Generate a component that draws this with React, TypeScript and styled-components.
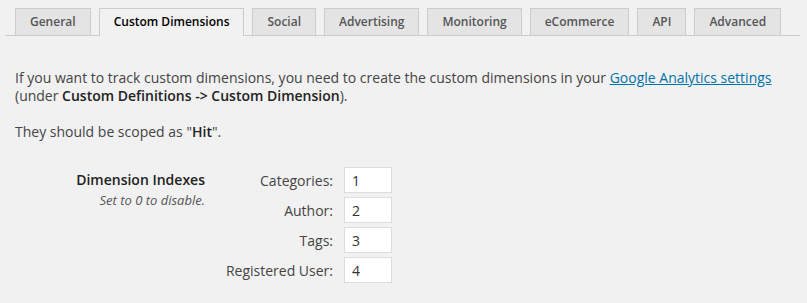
import { createGlobalStyle } from "styled-components"
import styled from "styled-components"

const tabs = [
  "General",
  "Custom Dimensions",
  "Social",
  "Advertising",
  "Monitoring",
  "eCommerce",
  "API",
  "Advanced",
]

const dimensions = [
  { label: "Categories:", value: "1" },
  { label: "Author:", value: "2" },
  { label: "Tags:", value: "3" },
  { label: "Registered User:", value: "4" },
]

const GlobalStyle = createGlobalStyle`
  html, body {
    margin: 0;
    padding: 0;
    background: #f1f1f1;
  }
  body {
    font-family: "Open Sans", "Liberation Sans", sans-serif;
    font-size: 14px;
    color: #444;
  }
`

const App = () => {
  return (
    <Page>
      <GlobalStyle />
      <TabBar>
        {tabs.map((tab) => (
          <Tab key={tab} $active={tab === "Custom Dimensions"}>
            {tab}
          </Tab>
        ))}
      </TabBar>
      <Content>
        <Intro>
          If you want to track custom dimensions, you need to create the custom dimensions in your{" "}
          <InlineLink href="#">Google Analytics settings</InlineLink>
          <br />
          (under <strong>Custom Definitions -&gt; Custom Dimension</strong>).
        </Intro>
        <Intro>
          They should be scoped as "<strong>Hit</strong>".
        </Intro>
        <FormGrid>
          <Heading>
            <HeadingTitle>Dimension Indexes</HeadingTitle>
            <HeadingHint>Set to 0 to disable.</HeadingHint>
          </Heading>
          <Fields>
            {dimensions.map((dim) => (
              <FieldRow key={dim.label}>
                <FieldLabel>{dim.label}</FieldLabel>
                <NumberInput type="text" defaultValue={dim.value} />
              </FieldRow>
            ))}
          </Fields>
        </FormGrid>
      </Content>
    </Page>
  )
}

const Page = styled.div`
  width: 807px;
  height: 303px;
  overflow: hidden;
`

const TabBar = styled.div`
  display: flex;
  align-items: flex-end;
  gap: 8px;
  margin: 0 7px 0 5px;
  padding: 8px 0 0 10px;
  border-bottom: 1px solid #ccc;
`

const Tab = styled.div<{ $active: boolean }>`
  box-sizing: border-box;
  height: ${(p) => (p.$active ? "28px" : "27px")};
  margin-bottom: ${(p) => (p.$active ? "-1px" : "0")};
  padding: 0 14px;
  border: 1px solid #ccc;
  border-bottom: none;
  background: ${(p) => (p.$active ? "#f1f1f1" : "#e4e4e4")};
  color: ${(p) => (p.$active ? "#000" : "#555")};
  font-weight: 600;
  font-size: 12px;
  line-height: 26px;
  white-space: nowrap;
`

const Content = styled.div`
  padding: 33px 0 0 15px;
`

const Intro = styled.p`
  margin: 0 0 18px;
  line-height: 18px;

  strong {
    font-weight: 600;
    color: #222;
  }
`

const InlineLink = styled.a`
  color: #0073aa;
  text-decoration: underline;
`

const FormGrid = styled.div`
  display: flex;
  margin-top: 26px;
`

const Heading = styled.div`
  width: 190px;
  text-align: right;
  padding-top: 4px;
`

const HeadingTitle = styled.div`
  font-weight: 600;
  color: #222;
  line-height: 18px;
`

const HeadingHint = styled.div`
  margin-top: 2px;
  font-style: italic;
  font-size: 13px;
  line-height: 18px;
  color: #555;
`

const Fields = styled.div`
  display: flex;
  flex-direction: column;
  gap: 4px;
`

const FieldRow = styled.div`
  display: flex;
  align-items: center;
`

const FieldLabel = styled.label`
  width: 128px;
  text-align: right;
  color: #444;
`

const NumberInput = styled.input`
  box-sizing: border-box;
  width: 48px;
  height: 26px;
  margin-left: 11px;
  padding: 0 7px;
  border: 1px solid #ddd;
  background: #fff;
  font-family: "Open Sans", "Liberation Sans", sans-serif;
  font-size: 14px;
  color: #333;
  outline: none;
`

export default App
